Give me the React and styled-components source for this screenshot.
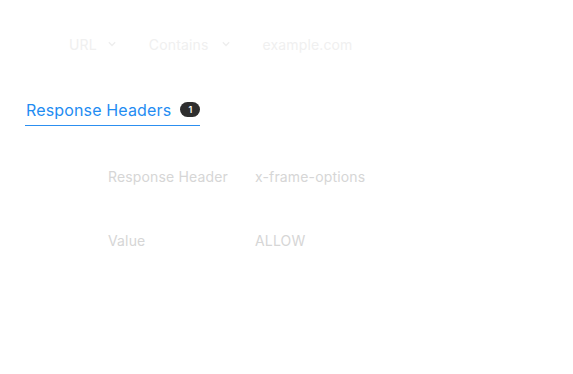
import React from "react";
import styled, { createGlobalStyle } from "styled-components";

const GlobalStyle = createGlobalStyle`
  * { box-sizing: border-box; margin: 0; padding: 0; }
  body {
    font-family: Inter, "Noto Sans", sans-serif;
    background: #fff;
    width: 573px;
    height: 374px;
    overflow: hidden;
    letter-spacing: 0.15px;
  }
`;

const Page = styled.div`
  display: flex;
  flex-direction: column;
`;

const FilterBar = styled.div`
  display: flex;
  align-items: center;
  height: 20px;
  margin-top: 34px;
  padding-left: 69px;
  font-size: 14px;
  color: #f0f0f0;
`;

const Select = styled.div`
  display: flex;
  align-items: center;
  gap: ${(p) => p.gap}px;
  margin-right: ${(p) => p.space}px;
`;

const Chevron = () => (
  <svg width="8" height="6" viewBox="0 0 8 6" fill="none">
    <path d="M0.8 1.2l3.2 3.2 3.2-3.2" stroke="#eeeeee" strokeWidth="1.4" />
  </svg>
);

const Tabs = styled.div`
  display: flex;
  margin-top: 45px;
  padding-left: 25px;
`;

const Tab = styled.div`
  display: flex;
  align-items: center;
  gap: 9px;
  height: 27px;
  padding-left: 1px;
  padding-bottom: 5px;
  border-bottom: 1px solid #2c8ff0;
  font-size: 16px;
  line-height: 20px;
  color: #1f8cf2;
`;

const Badge = styled.span`
  display: inline-flex;
  align-items: center;
  justify-content: center;
  width: 20px;
  height: 15px;
  border-radius: 8px;
  background: #2e2e2e;
  color: #fff;
  font-size: 9px;
  font-weight: 600;
  letter-spacing: 0;
`;

const Rows = styled.div`
  display: flex;
  flex-direction: column;
  gap: 44px;
  margin-top: 41px;
  padding-left: 108px;
`;

const Row = styled.div`
  display: grid;
  grid-template-columns: 147px auto;
  height: 20px;
  line-height: 20px;
  font-size: 14px;
  color: #d6d6d6;
`;

export default function App() {
  return (
    <>
      <GlobalStyle />
      <Page>
        <FilterBar>
          <Select gap={11} space={33}>
            URL <Chevron />
          </Select>
          <Select gap={14} space={32}>
            Contains <Chevron />
          </Select>
          <Select gap={0} space={0}>
            example.com
          </Select>
        </FilterBar>
        <Tabs>
          <Tab>
            Response Headers <Badge>1</Badge>
          </Tab>
        </Tabs>
        <Rows>
          <Row>
            <span>Response Header</span>
            <span>x-frame-options</span>
          </Row>
          <Row>
            <span>Value</span>
            <span>ALLOW</span>
          </Row>
        </Rows>
      </Page>
    </>
  );
}
